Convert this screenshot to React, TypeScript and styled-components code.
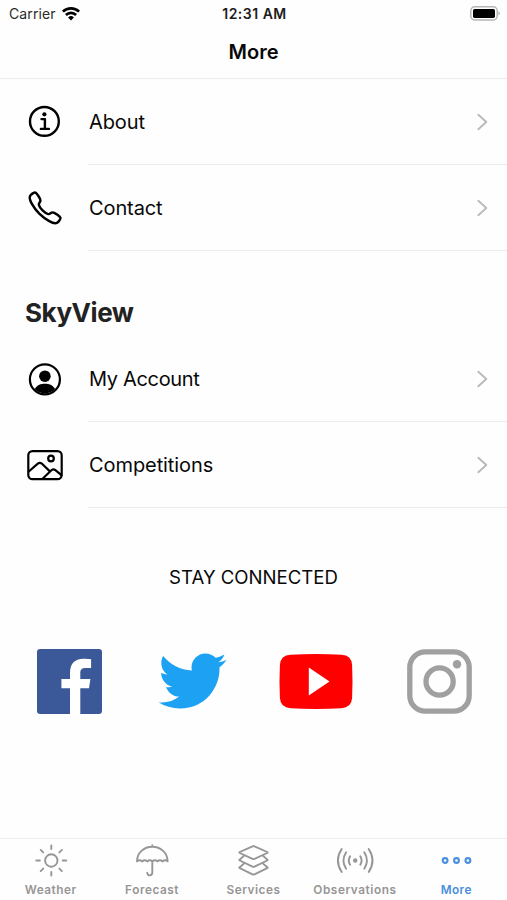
import React from "react";
import styled, { createGlobalStyle } from "styled-components";

const GlobalStyle = createGlobalStyle`
  * { box-sizing: border-box; }
  body { margin: 0; background: #fefefe; color: #080808; font-family: Inter, "Liberation Sans", sans-serif; }
  svg { display: block; flex: none; overflow: visible; }
`;

const Screen = styled.div`
  width: 507px;
  height: 900px;
  display: flex;
  flex-direction: column;
  background: #fefefe;
  overflow: hidden;
`;

const StatusBar = styled.div`
  height: 27px;
  display: grid;
  grid-template-columns: 1fr auto 1fr;
  align-items: center;
  padding: 0 7px 0 9px;
`;

const Carrier = styled.div`
  display: flex;
  align-items: center;
  gap: 6px;
  font-size: 14px;
  letter-spacing: 0.1px;
  color: #2a2a2a;
`;

const Clock = styled.div`
  font-size: 14px;
  font-weight: 600;
  letter-spacing: 0.5px;
  color: #1c1c1c;
`;

const BatteryBox = styled.div`
  display: flex;
  justify-content: flex-end;
`;

const NavBar = styled.header`
  height: 52px;
  display: flex;
  justify-content: center;
  padding-top: 12px;
  border-bottom: 1px solid #ececec;
  font-size: 20px;
  line-height: 26px;
  font-weight: 600;
`;

const List = styled.div`
  display: flex;
  flex-direction: column;
`;

const Row = styled.div`
  height: 86px;
  display: grid;
  grid-template-columns: 88px 1fr;
`;

const RowIcon = styled.div`
  display: flex;
  align-items: center;
  padding-left: 25px;
  color: #000;
`;

const RowBody = styled.div`
  display: flex;
  align-items: center;
  justify-content: space-between;
  padding: 0 19px 0 1px;
  border-bottom: 1px solid #ebebeb;
`;

const RowLabel = styled.span<{ $spacing: number }>`
  font-size: 20px;
  line-height: 26px;
  letter-spacing: ${(p) => p.$spacing}px;
`;

const SectionTitle = styled.h2`
  margin: 0;
  height: 85px;
  padding: 45px 0 0 25px;
  font-size: 26px;
  line-height: 34px;
  font-weight: 700;
  letter-spacing: -0.45px;
  color: #222;
`;

const SocialTitle = styled.div`
  margin-top: 56px;
  text-align: center;
  font-size: 18.6px;
  line-height: 26px;
`;

const SocialRow = styled.div`
  margin-top: 58px;
  padding: 0 35px 0 37px;
  height: 66px;
  display: grid;
  grid-template-columns: 121px 121px 128px 65px;
  align-items: center;
`;

const TabBar = styled.nav`
  margin-top: auto;
  height: 62px;
  display: grid;
  grid-template-columns: repeat(5, 1fr);
  border-top: 1px solid #eee;
`;

const Tab = styled.div<{ $active?: boolean }>`
  display: flex;
  flex-direction: column;
  align-items: center;
  padding-top: 3px;
  color: ${(p) => (p.$active ? "#4a8fdc" : "#969696")};
`;

const TabLabel = styled.span<{ $spacing: number }>`
  margin-top: 4px;
  font-size: 11.8px;
  line-height: 16px;
  font-weight: 600;
  letter-spacing: ${(p) => p.$spacing}px;
`;

const stroke = {
  fill: "none",
  stroke: "currentColor",
  strokeLinecap: "round" as const,
  strokeLinejoin: "round" as const,
};

const Wifi = () => (
  <svg width="18" height="14" viewBox="0 0 18 14" fill="none" stroke="#000" strokeWidth="2.6">
    <path d="M.9 4.7a11.5 11.5 0 0 1 16.2 0" />
    <path d="M3.9 8a7.2 7.2 0 0 1 10.2 0" />
    <path d="M6.1 10.5a4.1 4.1 0 0 1 5.8 0L9 13.4Z" fill="#000" stroke="none" />
  </svg>
);

const Battery = () => (
  <svg width="30" height="15" viewBox="0 0 30 15">
    <rect x=".8" y=".8" width="26.4" height="13.2" rx="4" fill="#fff" stroke="#b5b5b5" strokeWidth="1.5" />
    <rect x="3" y="2.9" width="22" height="9" rx="1.6" fill="#000" />
    <path d="M28.4 5.2q3.2 2.2 0 4.4Z" fill="#b5b5b5" />
  </svg>
);

const Chevron = () => (
  <svg width="13" height="18" viewBox="0 0 13 18" {...stroke} stroke="#b9b9b9" strokeWidth="1.9">
    <path d="m3.300 1.800 8 7.200-8 7.200" />
  </svg>
);

const InfoIcon = () => (
  <svg width="38" height="38" viewBox="0 0 38 38" {...stroke} strokeWidth="2.4">
    <circle cx="19.4" cy="18.4" r="14.4" />
    <circle cx="19.4" cy="11.3" r="2.1" fill="currentColor" stroke="none" />
    <path d="M16.5 16.1h3.4v9.700M15.900 25.900h8" />
  </svg>
);

const PhoneIcon = () => (
  <svg width="38" height="38" viewBox="-16 3 512 512" {...stroke} strokeWidth="33">
    <path d="M451 374c-15.880-16-54.340-39.350-73-48.760-24.300-12.240-26.300-13.240-45.400.95-12.740 9.470-21.210 17.930-36.120 14.750s-47.310-21.110-75.680-49.390-47.340-61.620-50.530-76.480 5.410-23.230 14.790-36c13.220-18 12.220-21 .92-45.300-8.810-18.900-32.840-57-48.900-72.800C119.900 44 119.900 47 108.830 51.600A160.150 160.150 0 0 0 83 65.370C67 76 58.120 84.830 51.910 98.100s-9 44.380 23.070 102.640 54.570 88.050 101.140 134.490S258.500 406.640 310.850 436c64.760 36.270 89.600 29.200 102.910 23s22.180-15 32.830-31a159.090 159.090 0 0 0 13.800-25.800C465 391.170 468 391.170 451 374Z" />
  </svg>
);

const AccountIcon = () => (
  <svg width="38" height="38" viewBox="0 0 38 38">
    <circle cx="19.9" cy="19.4" r="15" fill="none" stroke="currentColor" strokeWidth="2.2" />
    <circle cx="19.9" cy="16.2" r="5.8" fill="currentColor" />
    <path d="M9.600 29.100c2.500-4.300 6.400-5.400 10.300-5.400s7.800 1.100 10.300 5.400a14.400 14.400 0 0 1-20.600 0Z" fill="currentColor" />
  </svg>
);

const PhotoIcon = () => (
  <svg width="38" height="38" viewBox="0 0 38 38" {...stroke} strokeWidth="2.2">
    <rect x="3.3" y="5.1" width="33.4" height="28" rx="4.2" />
    <circle cx="26" cy="12.5" r="2.8" />
    <path d="m3.800 25.500 9-7.900q2.100-1.700 4.200.2l7.100 6.800M17.600 32.700l8.800-8.500q2-1.800 4-.1l6 5.100" />
  </svg>
);

const Facebook = () => (
  <svg width="65" height="65" viewBox="0 0 65 65">
    <rect width="65" height="65" rx="3.2" fill="#3b5998" />
    <path d="M33 65V39.200h-8.600v-9.300H33v-5.600C33 15 37.400 9.800 46.500 9.800c3.300 0 6 .2 7.600.4V19h-5.500c-4.500 0-5.300 2.200-5.300 5.400v5.500h10.100l-1.400 9.300h-8.700V65Z" fill="#fff" />
  </svg>
);

const Twitter = () => (
  <svg width="69" height="56" viewBox="0 2.1 24 19.8" fill="#1da1f2">
    <path d="M23.954 4.569c-.885.389-1.830.654-2.825.775 1.014-.611 1.794-1.574 2.163-2.723-.951.555-2.005.959-3.127 1.184-.896-.959-2.173-1.559-3.591-1.559-2.717 0-4.920 2.203-4.920 4.917 0 .39.045.765.127 1.124C7.691 8.094 4.066 6.130 1.640 3.161c-.427.722-.666 1.561-.666 2.475 0 1.710.87 3.213 2.188 4.096-.807-.026-1.566-.248-2.228-.616v.061c0 2.385 1.693 4.374 3.946 4.827-.413.111-.849.171-1.296.171-.314 0-.615-.03-.916-.086.631 1.953 2.445 3.377 4.604 3.417-1.680 1.319-3.809 2.105-6.102 2.105-.39 0-.779-.023-1.170-.067 2.189 1.394 4.768 2.209 7.557 2.209 9.054 0 13.999-7.496 13.999-13.986 0-.209 0-.42-.015-.63.961-.689 1.800-1.560 2.460-2.548Z" />
  </svg>
);

const YouTube = () => (
  <svg width="74" height="55" viewBox="0 0 73 55">
    <path d="M11 .8Q36.500-.8 62 .8 72 1.300 72.600 11q.8 16.500 0 33-.6 9.700-10.600 10.200-25.500 1.600-51 0Q1 53.700.4 44q-.8-16.500 0-33Q1 1.300 11 .8Z" fill="#f00" />
    <path d="m29.300 13.600 20.700 14-20.700 14Z" fill="#fff" />
  </svg>
);

const Instagram = () => (
  <svg width="65" height="65" viewBox="0 0 65 65" fill="none" stroke="#a0a0a0" strokeWidth="5.3">
    <rect x="2.8" y="2.8" width="59.4" height="59.4" rx="15.5" />
    <circle cx="32.6" cy="32.5" r="13.6" />
    <circle cx="50" cy="15.2" r="4.2" fill="#a0a0a0" stroke="none" />
  </svg>
);

const WeatherIcon = () => (
  <svg width="36" height="36" viewBox="0 0 36 36" {...stroke} strokeWidth="1.9">
    <circle cx="18.300" cy="18.500" r="6.200" />
    <path d="M18.300 3.500v3.600M18.300 29.900v3.600M3.300 18.500h3.600M29.700 18.500h3.600M7.700 7.900l2.500 2.500M26.400 26.600l2.500 2.500M28.900 7.900l-2.500 2.500M10.200 26.600l-2.500 2.500" />
  </svg>
);

const ForecastIcon = () => (
  <svg width="36" height="36" viewBox="0 0 36 36" {...stroke} strokeWidth="1.9">
    <path d="M18.300 3.300v1.500M3 19.400C3 10.800 9.900 4.800 18.300 4.800s15.300 6 15.300 14.600c-1.500-1.300-3.500-1.300-5.100 0-1.500-1.300-3.500-1.300-5.100 0-1.500-1.300-3.500-1.300-5.100 0-1.500-1.300-3.500-1.300-5.100 0-1.500-1.300-3.500-1.300-5.100 0-1.500-1.300-3.500-1.300-5.200 0ZM18.300 19.400v11.200c0 3.700-5 3.700-5 .2" />
  </svg>
);

const ServicesIcon = () => (
  <svg width="36" height="36" viewBox="0 0 36 36" {...stroke} strokeWidth="1.9">
    <path d="M17.500 4.300q1-.5 2 0l12.700 5.700q1 .5 0 1L19.500 16.900q-1 .5-2 0L4.800 11q-1-.5 0-1ZM8.900 13.900 4.800 17.500q-1 .5 0 1l12.700 6.100q1 .5 2 0l12.700-6.100q1-.5 0-1l-4.100-3.600M8.900 21.600l-4.100 3.600q-1 .5 0 1l12.700 6.100q1 .5 2 0l12.700-6.100q1-.5 0-1l-4.100-3.600" />
  </svg>
);

const ObservationsIcon = () => (
  <svg width="38" height="36" viewBox="0 0 38 36" {...stroke} strokeWidth="1.9">
    <circle cx="19.200" cy="18.500" r="2.200" fill="currentColor" stroke="none" />
    <path d="M14.100 14.200q-2.600 4.300 0 8.600M24.300 14.200q2.600 4.300 0 8.600M10.100 10.200q-5.200 8.300 0 16.600M28.300 10.200q5.200 8.300 0 16.600M5.700 7q-7.600 11.500 0 23M32.700 7q7.600 11.500 0 23" />
  </svg>
);

const MoreIcon = () => (
  <svg width="36" height="36" viewBox="0 0 36 36" {...stroke} strokeWidth="2.1">
    <circle cx="7.100" cy="18.500" r="2.400" />
    <circle cx="18.500" cy="18.500" r="2.400" />
    <circle cx="29.900" cy="18.500" r="2.400" />
  </svg>
);

type Entry = { label: string; icon: React.ReactNode; spacing: number };

const general: Entry[] = [
  { label: "About", icon: <InfoIcon />, spacing: -0.1 },
  { label: "Contact", icon: <PhoneIcon />, spacing: -0.1 },
];

const skyView: Entry[] = [
  { label: "My Account", icon: <AccountIcon />, spacing: -0.33 },
  { label: "Competitions", icon: <PhotoIcon />, spacing: -0.08 },
];

const tabs: (Entry & { active?: boolean })[] = [
  { label: "Weather", icon: <WeatherIcon />, spacing: 0.5 },
  { label: "Forecast", icon: <ForecastIcon />, spacing: 0.55 },
  { label: "Services", icon: <ServicesIcon />, spacing: 0.5 },
  { label: "Observations", icon: <ObservationsIcon />, spacing: 0.55 },
  { label: "More", icon: <MoreIcon />, spacing: 0.4, active: true },
];

const Menu = ({ entries }: { entries: Entry[] }) => (
  <List>
    {entries.map((e) => (
      <Row key={e.label}>
        <RowIcon>{e.icon}</RowIcon>
        <RowBody>
          <RowLabel $spacing={e.spacing}>{e.label}</RowLabel>
          <Chevron />
        </RowBody>
      </Row>
    ))}
  </List>
);

export default function App() {
  return (
    <>
      <GlobalStyle />
      <Screen>
        <StatusBar>
          <Carrier>
            <span>Carrier</span>
            <Wifi />
          </Carrier>
          <Clock>12:31 AM</Clock>
          <BatteryBox>
            <Battery />
          </BatteryBox>
        </StatusBar>
        <NavBar>More</NavBar>
        <Menu entries={general} />
        <SectionTitle>SkyView</SectionTitle>
        <Menu entries={skyView} />
        <SocialTitle>STAY CONNECTED</SocialTitle>
        <SocialRow>
          <Facebook />
          <Twitter />
          <YouTube />
          <Instagram />
        </SocialRow>
        <TabBar>
          {tabs.map((t) => (
            <Tab key={t.label} $active={t.active}>
              {t.icon}
              <TabLabel $spacing={t.spacing}>{t.label}</TabLabel>
            </Tab>
          ))}
        </TabBar>
      </Screen>
    </>
  );
}
